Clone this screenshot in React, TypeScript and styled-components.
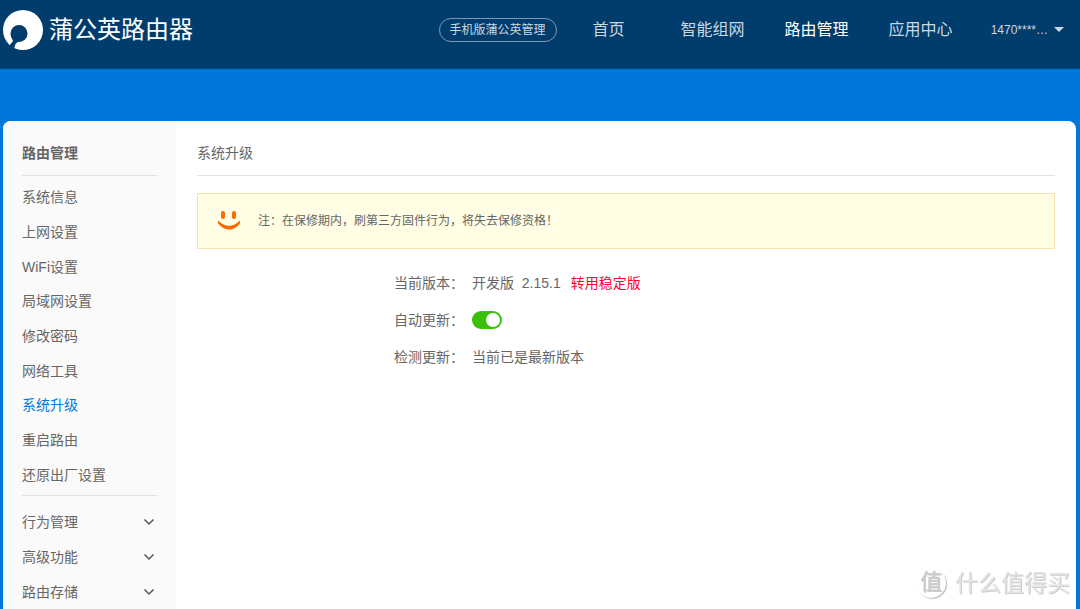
import { useId, useState } from "react";
import styled, { createGlobalStyle, css } from "styled-components";

const GlobalStyle = createGlobalStyle`
  *, *::before, *::after { box-sizing: border-box; }
  body {
    margin: 0;
    background: #0078d9;
    color: #666;
    font: 14px/20px "Liberation Sans", "Noto Sans CJK SC", sans-serif;
  }
  button { font: inherit; color: inherit; background: none; border: 0; padding: 0; cursor: pointer; }
  a { color: inherit; text-decoration: none; }
  ul { list-style: none; margin: 0; padding: 0; }
  h1, h2, p { margin: 0; font: inherit; }
`;

const Page = styled.div`
  min-height: 100vh;
  display: flex;
  flex-direction: column;
`;

const Header = styled.header`
  height: 69px;
  padding: 0 16px 9px 3px;
  background: #003c6c;
  border-bottom: 1px solid #00427a;
  color: #ccd8e1;
  display: flex;
  align-items: center;
`;

const Brand = styled.a`
  display: flex;
  align-items: center;
  gap: 6px;
  margin-right: auto;
  color: #fff;
  font-size: 24px;
  line-height: 40px;
  white-space: nowrap;
`;

const MobileLink = styled.a`
  height: 24px;
  padding: 0 10px;
  border: 1px solid #8098ae;
  border-radius: 12px;
  font-size: 12px;
  line-height: 22px;
  white-space: nowrap;
`;

const Nav = styled.nav`
  display: flex;
`;

const NavLink = styled.a<{ $active?: boolean }>`
  width: 104px;
  text-align: center;
  font-size: 16px;
  line-height: 24px;
  ${(p) => p.$active && css`color: #fff;`}
`;

const UserButton = styled.button`
  display: flex;
  align-items: center;
  gap: 6px;
  margin-left: 18px;
  font-size: 12px;
  line-height: 20px;
`;

const Caret = styled.span`
  border: 5px solid transparent;
  border-top-color: currentColor;
  border-bottom: 0;
`;

const Card = styled.div`
  flex: 1;
  display: flex;
  margin: 52px 4px 0 3px;
  background: #fff;
  border-radius: 8px 8px 0 0;
  overflow: hidden;
`;

const Sidebar = styled.aside`
  flex: 0 0 173px;
  padding: 0 19px;
  background: #fafafa;
`;

const SectionTitle = styled.h2<{ $bold?: boolean }>`
  padding: 22px 0 12px;
  border-bottom: 1px solid #e2e2e2;
  ${(p) => p.$bold && css`font-weight: 700;`}
`;

const Menu = styled.ul`
  display: grid;
  grid-auto-rows: 1fr;
  align-items: center;
`;

const PageMenu = styled(Menu)`
  height: 320px;
  padding: 4px 0 3px;
  border-bottom: 1px solid #e2e2e2;
`;

const GroupMenu = styled(Menu)`
  height: 113px;
  padding-top: 9px;
`;

const MenuLink = styled.a<{ $active?: boolean }>`
  display: block;
  color: ${(p) => (p.$active ? "#0078d9" : "inherit")};
`;

const GroupButton = styled.button`
  width: 100%;
  display: flex;
  align-items: center;
  justify-content: space-between;
  padding-right: 2px;
`;

const Main = styled.main`
  flex: 1;
  padding: 0 21px;
`;

const Notice = styled.p`
  display: flex;
  align-items: center;
  gap: 17px;
  height: 56px;
  margin-top: 17px;
  padding-left: 19px;
  background: #fffde3;
  border: 1px solid #f7e3b0;
  font-size: 12px;
`;

const Form = styled.div`
  margin-top: 15px;
  padding-left: 197px;
`;

const Row = styled.div`
  display: flex;
  align-items: center;
  gap: 8px;
  height: 37px;
`;

const RowLabel = styled.label`
  width: 70px;
  white-space: nowrap;
`;

const Value = styled.div`
  display: flex;
  white-space: pre;
`;

const SwitchLink = styled.a`
  margin-left: 10px;
  color: #ff0033;
`;

const Toggle = styled.input`
  appearance: none;
  width: 30px;
  height: 18px;
  margin: 0;
  padding: 2px;
  border-radius: 9px;
  background: #bbb;
  cursor: pointer;
  &::before {
    content: "";
    display: block;
    width: 14px;
    height: 14px;
    border-radius: 50%;
    background: #fff;
  }
  &:checked { background: #3cbf0a; }
  &:checked::before { margin-left: auto; }
`;

const Watermark = styled.div`
  position: fixed;
  right: 10px;
  bottom: 8px;
  display: flex;
  align-items: center;
  gap: 9px;
  color: #e4e4e4;
  font-size: 23px;
  line-height: 36px;
  text-shadow: 1px 1px 0 #ccc;
  pointer-events: none;
`;

const Seal = styled.span`
  width: 30px;
  height: 30px;
  border-radius: 50%;
  box-shadow: 1px 1px 1px #bbb;
  text-align: center;
  color: #ccc;
  font-size: 22px;
  line-height: 28px;
`;

function Logo() {
  return (
    <svg width="40" height="40" viewBox="0 0 40 40" aria-hidden="true">
      <circle cx="20" cy="20" r="20" fill="#fff" />
      <circle cx="16" cy="23.500" r="8.500" fill="#003c6c" />
      <path d="M8 26 L10 31 L6 36 L7 40 L11 39 L12.500 34 L16 31 Z" fill="#003c6c" />
    </svg>
  );
}

function Smile() {
  return (
    <svg width="24" height="20" viewBox="0 0 24 20" fill="#ff6a00" aria-hidden="true">
      <rect x="4" y="0" width="4" height="8" rx="2" />
      <rect x="15" y="0" width="4" height="8" rx="2" />
      <path d="M1 9.500 Q12 20 23 9.500 L23 12.500 Q18 18.500 12 18.500 Q6 18.500 1 12.500 Z" />
    </svg>
  );
}

function Chevron() {
  return (
    <svg width="12" height="8" viewBox="0 0 12 8" fill="none" stroke="#555" strokeWidth="1.5" aria-hidden="true">
      <path d="M1.500 1.500 L6 6 L10.500 1.500" />
    </svg>
  );
}

const navItems = ["首页", "智能组网", "路由管理", "应用中心"];
const pages = ["系统信息", "上网设置", "WiFi设置", "局域网设置", "修改密码", "网络工具", "系统升级", "重启路由", "还原出厂设置"];
const groups = ["行为管理", "高级功能", "路由存储"];

export default function App() {
  const [autoUpdate, setAutoUpdate] = useState(true);
  const toggleId = useId();
  return (
    <Page>
      <GlobalStyle />
      <Header>
        <Brand href="#"><Logo />蒲公英路由器</Brand>
        <MobileLink href="#">手机版蒲公英管理</MobileLink>
        <Nav>
          {navItems.map((item) => (
            <NavLink key={item} href="#" $active={item === "路由管理"}>{item}</NavLink>
          ))}
        </Nav>
        <UserButton>1470****…<Caret /></UserButton>
      </Header>
      <Card>
        <Sidebar>
          <SectionTitle $bold>路由管理</SectionTitle>
          <PageMenu>
            {pages.map((page) => (
              <li key={page}><MenuLink href="#" $active={page === "系统升级"}>{page}</MenuLink></li>
            ))}
          </PageMenu>
          <GroupMenu>
            {groups.map((group) => (
              <li key={group}><GroupButton>{group}<Chevron /></GroupButton></li>
            ))}
          </GroupMenu>
        </Sidebar>
        <Main>
          <SectionTitle>系统升级</SectionTitle>
          <Notice><Smile />注：在保修期内，刷第三方固件行为，将失去保修资格！</Notice>
          <Form>
            <Row>
              <RowLabel as="span">当前版本：</RowLabel>
              <Value>开发版{"  "}2.15.1<SwitchLink href="#">转用稳定版</SwitchLink></Value>
            </Row>
            <Row>
              <RowLabel htmlFor={toggleId}>自动更新：</RowLabel>
              <Toggle id={toggleId} type="checkbox" checked={autoUpdate} onChange={(e) => setAutoUpdate(e.target.checked)} />
            </Row>
            <Row>
              <RowLabel as="span">检测更新：</RowLabel>
              <Value>当前已是最新版本</Value>
            </Row>
          </Form>
        </Main>
      </Card>
      <Watermark aria-hidden="true"><Seal>值</Seal>什么值得买</Watermark>
    </Page>
  );
}
